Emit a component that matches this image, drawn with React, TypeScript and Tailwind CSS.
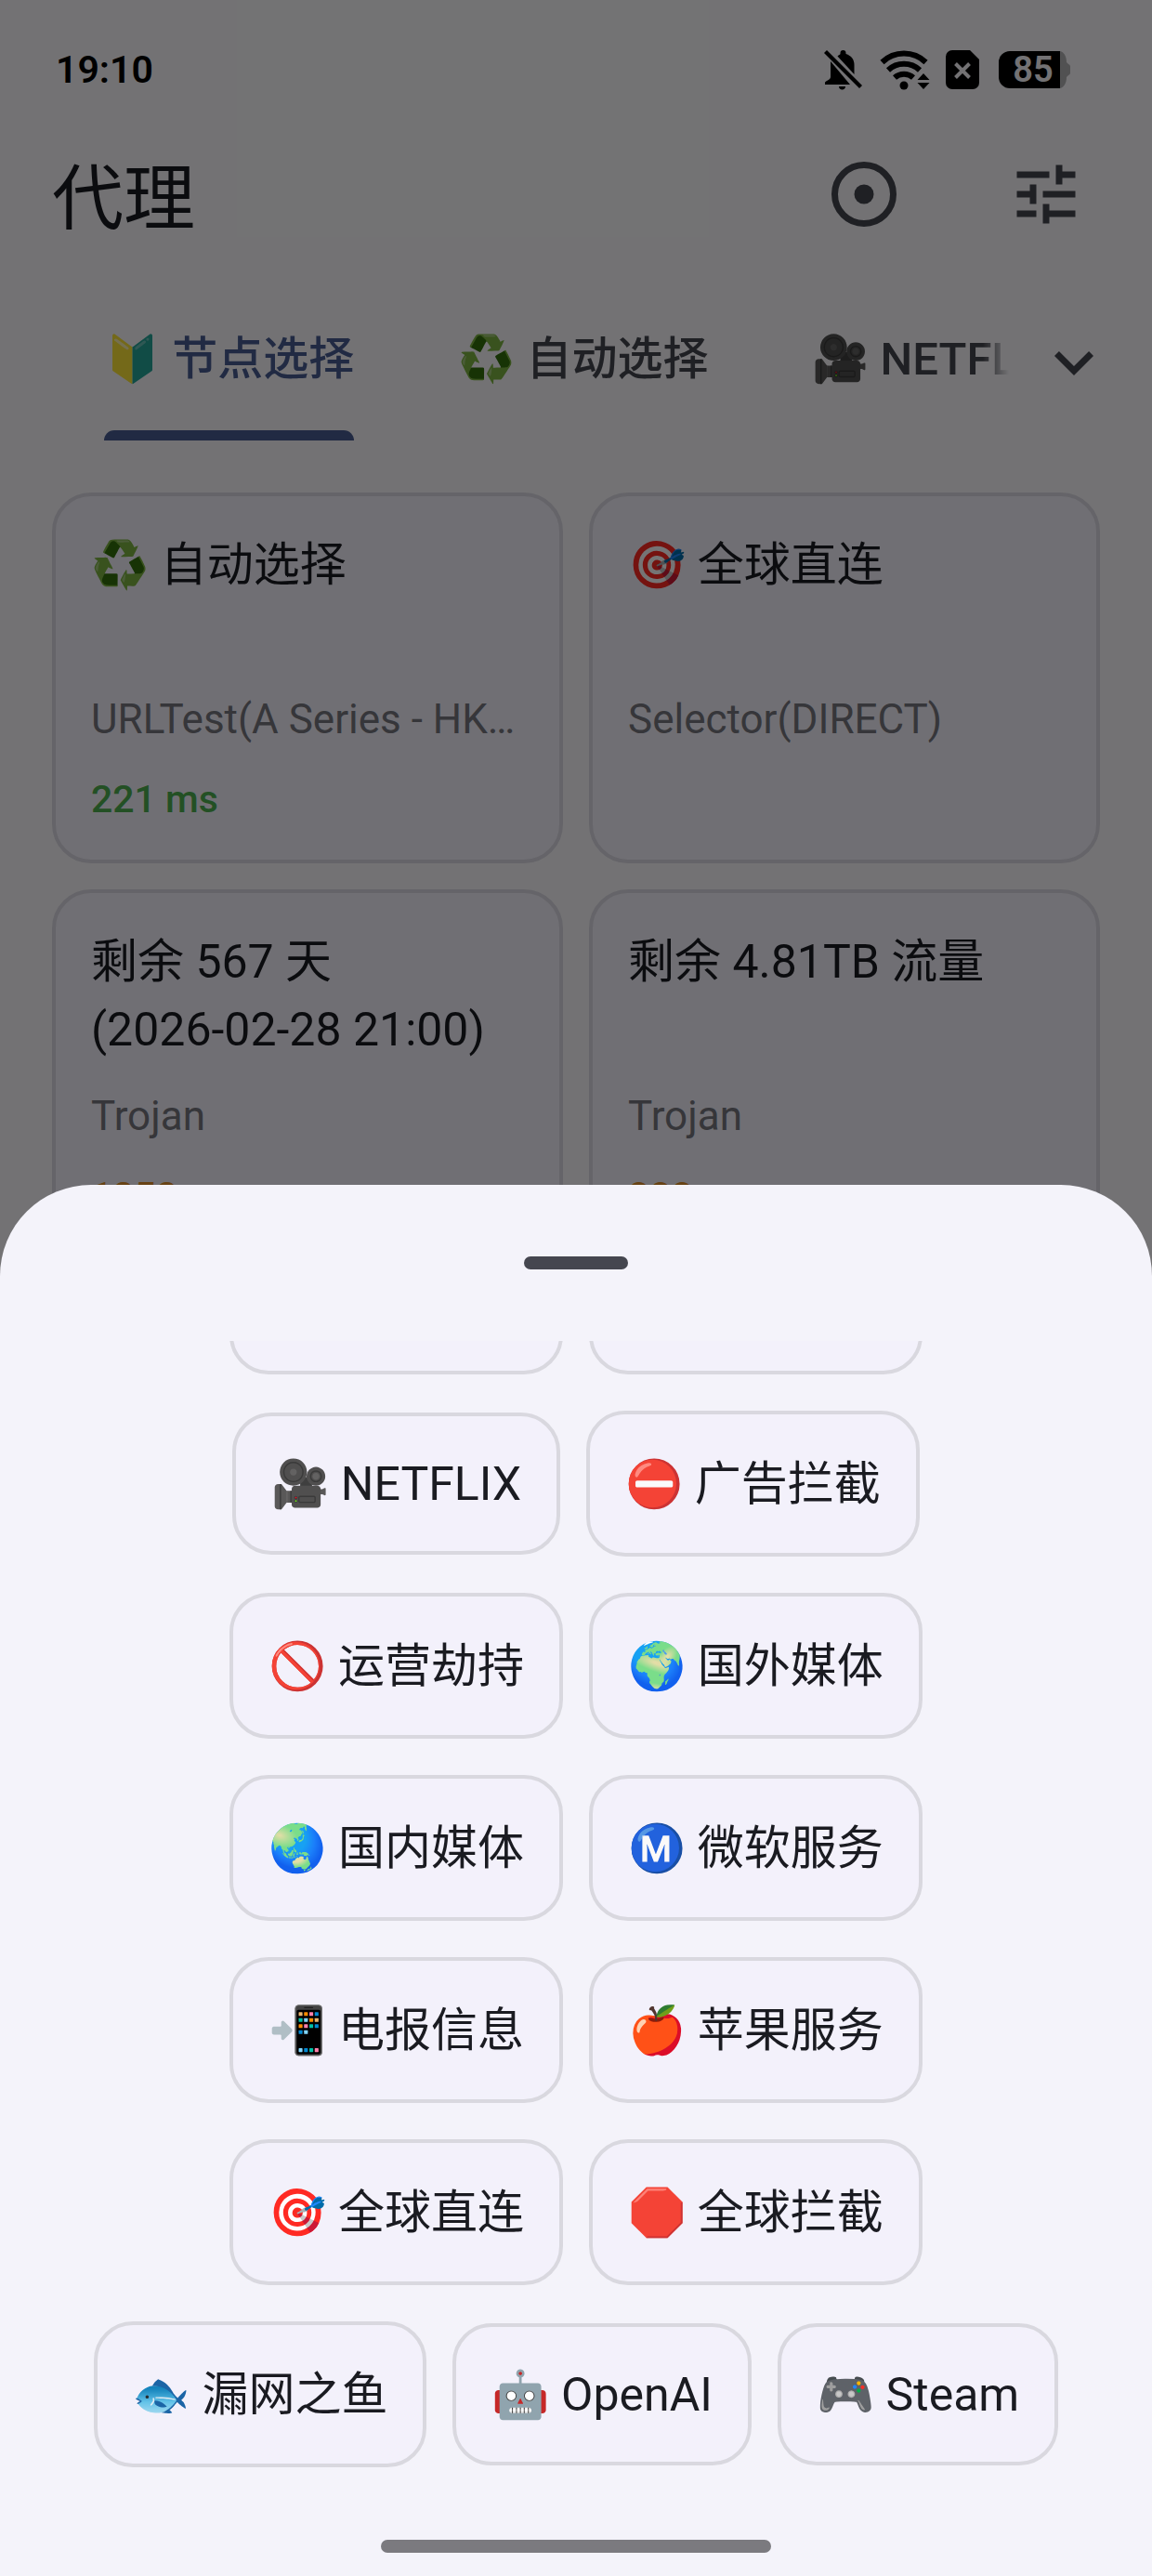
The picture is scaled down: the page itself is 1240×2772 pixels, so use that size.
import React from "react";

type Proxy = { name: string; kind: string; delay?: string; tone?: string };

const tabs = ["🔰 节点选择", "♻️ 自动选择", "🎥 NETFLIX"];

const proxies: Proxy[] = [
  { name: "♻️ 自动选择", kind: "URLTest(A Series - HK…", delay: "221 ms", tone: "text-[#4caf50]" },
  { name: "🎯 全球直连", kind: "Selector(DIRECT)" },
  { name: "剩余 567 天\n(2026-02-28 21:00)", kind: "Trojan", delay: "1252 ms", tone: "text-[#e0902c]" },
  { name: "剩余 4.81TB 流量", kind: "Trojan", delay: "888 ms", tone: "text-[#e0902c]" },
];

const groupRows = [
  ["🔰 节点选择", "♻️ 自动选择"],
  ["🎥 NETFLIX", "⛔ 广告拦截"],
  ["🚫 运营劫持", "🌍 国外媒体"],
  ["🌏 国内媒体", "Ⓜ️ 微软服务"],
  ["📲 电报信息", "🍎 苹果服务"],
  ["🎯 全球直连", "🛑 全球拦截"],
  ["🐟 漏网之鱼", "🤖 OpenAI", "🎮 Steam"],
];

function StatusBar() {
  return (
    <div className="flex h-[150px] items-center justify-between pr-[88px] pl-[60px] text-black">
      <span className="text-[41px] leading-none font-semibold">19:10</span>
      <div className="flex items-center">
        <svg className="h-11 w-[42px]" viewBox="0 0 42 44" fill="currentColor" aria-hidden="true">
          <path d="M7 13v17c0 3-6 4-6 6v2h27z" />
          <path d="M14.500 7.500c1.500-1.500 3-2 3-2.500V4a3 3 0 0 1 6 0v1c6 2 9 6 9 12v10z" />
          <path d="M16 40h7c0 2-1.500 3.500-3.500 3.500S16 42 16 40z" />
          <path d="M0 4 3 1l38 38-3 3z" />
        </svg>
        <svg className="ml-[18px] h-11 w-[54px]" viewBox="0 0 54 44" aria-hidden="true">
          <g fill="none" stroke="currentColor" strokeWidth="6">
            <path d="M2.500 14a34 34 0 0 1 47 0" />
            <path d="M9 22.500a25 25 0 0 1 34 0" />
            <path d="M16 30.500a15 15 0 0 1 20 0" />
          </g>
          <circle cx="26" cy="39" r="4.500" fill="currentColor" />
          <path d="M47 26l6.500 7h-13zM47 43l6.500-7h-13z" fill="currentColor" />
        </svg>
        <svg className="ml-[17px] h-11 w-9" viewBox="0 0 36 44" aria-hidden="true">
          <path d="M7 1h19l10 10v25a7 7 0 0 1-7 7H7a7 7 0 0 1-7-7V8a7 7 0 0 1 7-7z" fill="currentColor" />
          <path d="M10.500 15.500l15 15m0-15l-15 15" stroke="#faf9fd" strokeWidth="4" />
        </svg>
        <div className="ml-[21px] flex h-10 items-center">
          <span className="flex h-10 w-[66px] items-center justify-center rounded-l-[12px] bg-black pl-2 text-[38px] leading-none font-semibold text-[#faf9fd]">
            85
          </span>
          <svg className="h-10 w-[11px] text-[#b0b0b2]" viewBox="0 0 11 40" fill="currentColor" aria-hidden="true">
            <path d="M0 0c4 1 7 5 7 12l2 2c2 1 2 2 2 3v6c0 1 0 2-2 3l-2 2c0 7-3 11-7 12z" />
          </svg>
        </div>
      </div>
    </div>
  );
}

function Header() {
  return (
    <header className="flex h-[118px] items-center justify-between pr-[72px] pl-14">
      <h1 className="pt-3 text-[77px] leading-none font-normal text-[#1a1b21]">代理</h1>
      <div className="flex items-center gap-28 text-[#45464f]">
        <button type="button" aria-label="定位当前节点">
          <svg className="block size-[84px]" viewBox="0 0 24 24" aria-hidden="true">
            <circle cx="12" cy="12" r="9" fill="none" stroke="currentColor" strokeWidth="2" />
            <circle cx="12" cy="12" r="3" fill="currentColor" />
          </svg>
        </button>
        <button type="button" aria-label="设置">
          <svg className="block size-[84px]" viewBox="0 0 24 24" fill="currentColor" aria-hidden="true">
            <path d="M3 17v2h6v-2H3zM3 5v2h10V5H3zm10 16v-2h8v-2h-8v-2h-2v6h2zM7 9v2H3v2h4v2h2V9H7zm14 4v-2H11v2h10zm-6-4h2V7h4V5h-4V3h-2v6z" />
          </svg>
        </button>
      </div>
    </header>
  );
}

function TabBar() {
  return (
    <nav className="mt-[38px] flex h-[168px] items-center pr-[42px] pl-14">
      <div
        role="tablist"
        className="flex h-full min-w-0 flex-1 overflow-hidden [mask-image:linear-gradient(to_right,black_calc(100%-28px),transparent)]"
      >
        {tabs.map((tab, i) => (
          <button
            key={tab}
            type="button"
            role="tab"
            aria-selected={i === 0}
            className={
              i === 0
                ? "flex shrink-0 px-14 font-medium text-[#495d92]"
                : "flex shrink-0 px-14 font-medium text-[#45464f]"
            }
          >
            <span className="flex h-full flex-col text-[49px] leading-[157px] whitespace-nowrap">
              <span className="h-[157px] pt-[2px]">{tab}</span>
              {i === 0 && <span className="block h-[11px] rounded-t-[11px] bg-[#495d92]" />}
            </span>
          </button>
        ))}
      </div>
      <button type="button" aria-label="展开" className="ml-[28px] text-[#45464f]">
        <svg className="block size-[84px]" viewBox="0 0 24 24" fill="currentColor" aria-hidden="true">
          <path d="M16.590 8.590L12 13.170 7.410 8.590 6 10l6 6 6-6z" />
        </svg>
      </button>
    </nav>
  );
}

function ProxyCard({ name, kind, delay, tone }: Proxy) {
  return (
    <button
      type="button"
      className="flex min-w-0 flex-col items-stretch rounded-[42px] border-4 border-[#dddbe4] bg-[#f4f2fd] px-[38px] pt-[38px] pb-[37px] text-left"
    >
      <span className="h-[146px] text-[50px] leading-[73px] whitespace-pre text-[#1a1b21]">{name}</span>
      <span className="mt-[26px] text-[44px] leading-[60px] whitespace-nowrap text-[#77777e]">{kind}</span>
      <span className={`mt-[28px] block h-14 text-[41px] leading-[56px] font-medium ${tone ?? ""}`}>{delay}</span>
    </button>
  );
}

function GroupChip({ label }: { label: string }) {
  const latin = /[A-Za-z]{2}/.test(label);
  return (
    <button
      type="button"
      className={`rounded-[42px] border-4 border-[#d9d8df] bg-[#f3f1fb] px-[38px] text-[50px] leading-[70px] whitespace-nowrap text-[#1a1b21] ${latin ? "h-[153px]" : "h-[157px]"}`}
    >
      {label}
    </button>
  );
}

function GroupSheet() {
  return (
    <section
      role="dialog"
      aria-label="代理组"
      className="absolute inset-x-0 bottom-0 flex flex-col items-center rounded-t-[98px] bg-[#f4f3fa]"
    >
      <div className="flex h-[168px] items-center">
        <span className="h-[14px] w-28 rounded-full bg-[#45464f]" />
      </div>
      <div className="flex h-[1212px] w-full flex-col justify-end gap-[39px] overflow-hidden">
        {groupRows.map((row) => (
          <div key={row[0]} className="flex shrink-0 items-center justify-center gap-7">
            {row.map((label) => (
              <GroupChip key={label} label={label} />
            ))}
          </div>
        ))}
      </div>
      <div className="flex h-[117px] w-full items-end justify-center pb-[25px]">
        <span className="h-[14px] w-[420px] rounded-full bg-[#7b7a7f]" />
      </div>
    </section>
  );
}

export default function App() {
  return (
    <div className="relative h-screen overflow-hidden bg-[#faf9fd] font-['Roboto','Noto_Sans_CJK_SC','Noto_Color_Emoji',sans-serif]">
      <StatusBar />
      <Header />
      <TabBar />
      <main className="mt-14 grid grid-cols-2 gap-7 px-14">
        {proxies.map((p) => (
          <ProxyCard key={p.name} {...p} />
        ))}
      </main>
      <div className="absolute inset-0 bg-black/54" />
      <GroupSheet />
    </div>
  );
}
